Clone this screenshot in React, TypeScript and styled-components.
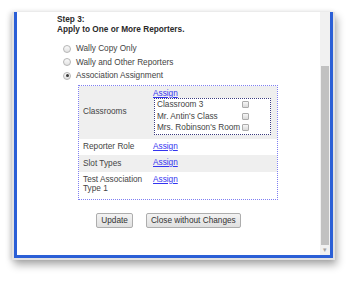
import styled, { createGlobalStyle } from 'styled-components';

const GlobalStyle = createGlobalStyle`
  html, body {
    margin: 0;
    padding: 0;
    background: #fff;
  }

  body {
    font-family: "Liberation Sans", Arial, sans-serif;
    font-size: 8.25px;
    color: #444;
  }
`;

type Assoc = { label: string; lines?: string[]; items?: string[]; shaded: boolean; align: 'middle' | 'top' };

const reporterOptions = ['Wally Copy Only', 'Wally and Other Reporters', 'Association Assignment'];

const associations: Assoc[] = [
  {
    label: 'Classrooms',
    items: ['Classroom 3', "Mr. Antin's Class", "Mrs. Robinson's Room"],
    shaded: true,
    align: 'middle'
  },
  { label: 'Reporter Role', shaded: false, align: 'middle' },
  { label: 'Slot Types', shaded: true, align: 'middle' },
  { label: 'Test Association', lines: ['Test Association', 'Type 1'], shaded: false, align: 'top' }
];

export default function App() {
  return (
    <>
      <GlobalStyle />
      <Page>
        <Dialog>
          <Frame>
            <Content>
              <StepTitle>
                Step 3:
                <br />
                Apply to One or More Reporters.
              </StepTitle>
              <RadioList>
                {reporterOptions.map((option, index) => (
                  <RadioRow key={option}>
                    <Radio type="radio" name="reporters" defaultChecked={index === 2} readOnly />
                    <span>{option}</span>
                  </RadioRow>
                ))}
              </RadioList>
              <AssocTable>
                <tbody>
                  {associations.map((row) => (
                    <AssocRow key={row.label} $shaded={row.shaded}>
                      <LabelCell $align={row.align}>
                        {row.lines ? row.lines.map((line) => <div key={line}>{line}</div>) : row.label}
                      </LabelCell>
                      <LinkCell>
                        <AssignLink href="#">Assign</AssignLink>
                        {row.items && (
                          <ItemBox>
                            {row.items.map((item) => (
                              <ItemRow key={item}>
                                <span>{item}</span>
                                <Check type="checkbox" readOnly />
                              </ItemRow>
                            ))}
                          </ItemBox>
                        )}
                      </LinkCell>
                    </AssocRow>
                  ))}
                </tbody>
              </AssocTable>
              <Actions>
                <ActionButton type="button">Update</ActionButton>
                <ActionButton type="button">Close without Changes</ActionButton>
              </Actions>
            </Content>
            <Scrollbar>
              <ScrollTrack>
                <ScrollThumb />
              </ScrollTrack>
              <ScrollArrow>▾</ScrollArrow>
            </Scrollbar>
          </Frame>
        </Dialog>
      </Page>
    </>
  );
}

const Page = styled.div`
  width: 353px;
  height: 281px;
  padding: 12px 0 0 12px;
  box-sizing: border-box;
  overflow: hidden;
`;

const Dialog = styled.div`
  width: 323px;
  height: 248px;
  box-sizing: border-box;
  border: 2px solid #e2e2e2;
  border-top: none;
  background: #fff;
  box-shadow: 2px 5px 8px rgba(0, 0, 0, 0.32), -2px 0 5px rgba(0, 0, 0, 0.12);
`;

const Frame = styled.div`
  height: 100%;
  box-sizing: border-box;
  display: flex;
  border: 3px solid #2b5fd6;
  border-top: none;
`;

const Content = styled.div`
  flex: 1;
  min-width: 0;
  padding: 3px 0 0 40px;
  display: flex;
  flex-direction: column;
`;

const StepTitle = styled.p`
  margin: 0;
  font-weight: bold;
  font-size: 8.25px;
  line-height: 10px;
  color: #2a2a2a;
`;

const RadioList = styled.div`
  margin-top: 7px;
  display: flex;
  flex-direction: column;
  padding-left: 6px;
`;

const RadioRow = styled.label`
  height: 13.5px;
  display: flex;
  align-items: center;
  gap: 5px;
  color: #444;
`;

const Radio = styled.input`
  appearance: none;
  margin: 0;
  width: 8px;
  height: 8px;
  border-radius: 50%;
  border: 1px solid #b5b5b5;
  background: linear-gradient(#fafafa, #e2e2e2);
  box-sizing: border-box;
  display: grid;
  place-items: center;

  &:checked::after {
    content: '';
    width: 3px;
    height: 3px;
    border-radius: 50%;
    background: #3a3a3a;
  }
`;

const AssocTable = styled.table`
  margin: 2px 0 0 21px;
  width: 200px;
  border: 1px dotted #7f7ff2;
  border-collapse: separate;
  border-spacing: 0;
  padding-bottom: 1px;
`;

const AssocRow = styled.tr<{ $shaded: boolean }>`
  background: ${({ $shaded }) => ($shaded ? '#efefef' : 'transparent')};
`;

const LabelCell = styled.td<{ $align: 'middle' | 'top' }>`
  width: 70px;
  padding: ${({ $align }) => ($align === 'top' ? '3px 0 3px 4px' : '0 0 0 4px')};
  vertical-align: ${({ $align }) => $align};
  line-height: 9.5px;
  height: ${({ $align }) => ($align === 'top' ? '20px' : '16px')};
  color: #444;
`;

const LinkCell = styled.td`
  padding: 3px 5px 4px 0;
  vertical-align: top;
  line-height: 9.5px;
`;

const AssignLink = styled.a`
  color: #3434f0;
  text-decoration: underline;
`;

const ItemBox = styled.div`
  margin-left: 1px;
  width: 117px;
  box-sizing: border-box;
  border: 1px dotted #3d3d80;
  padding: 0 0 0 2px;
  background: #fff;
`;

const ItemRow = styled.div`
  height: 11.5px;
  display: grid;
  grid-template-columns: 85px 7px;
  align-items: center;
  color: #444;
`;

const Check = styled.input`
  appearance: none;
  margin: 0;
  width: 7px;
  height: 7px;
  border: 1px solid #ababab;
  border-radius: 1px;
  background: linear-gradient(#f6f6f6, #dadada);
  box-sizing: border-box;
`;

const Actions = styled.div`
  margin-top: 13px;
  margin-left: -40px;
  display: flex;
  justify-content: center;
  gap: 13px;
`;

const ActionButton = styled.button`
  font-family: "Liberation Sans", Arial, sans-serif;
  font-size: 8.25px;
  line-height: 11px;
  padding: 1px 4px;
  margin: 0;
  color: #333;
  border: 1px solid #adadad;
  border-radius: 2px;
  background: linear-gradient(#f3f3f3, #e0e0e0);
`;

const Scrollbar = styled.div`
  width: 10px;
  display: flex;
  flex-direction: column;
  background: #f1f1f1;
`;

const ScrollTrack = styled.div`
  flex: 1;
  display: flex;
  flex-direction: column;
  justify-content: flex-end;
  padding: 54px 1px 0 1px;
`;

const ScrollThumb = styled.div`
  flex: 1;
  background: #c1c1c1;
`;

const ScrollArrow = styled.div`
  height: 10px;
  font-size: 7px;
  line-height: 10px;
  text-align: center;
  color: #a3a3a3;
`;
